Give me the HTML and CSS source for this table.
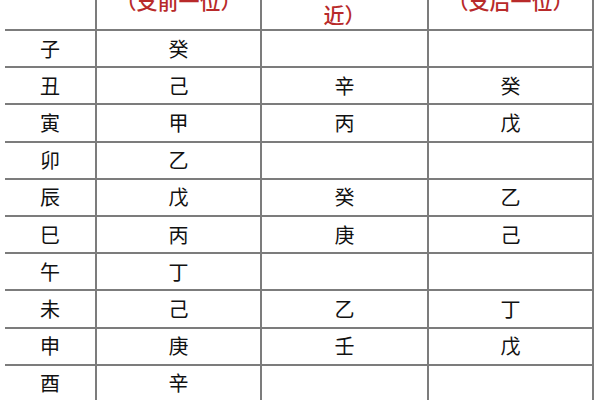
FILE: index.html
```html
<!DOCTYPE html>
<html lang="zh">
<head>
<meta charset="utf-8">
<title>地支藏干表</title>
<link rel="stylesheet" href="styles.css">
</head>
<body>
<div class="table">
  <div class="cell head"></div>
  <div class="cell head"><span class="one red">（支前一位）</span></div>
  <div class="cell head"><span class="two red">（与本支相<br>近）</span></div>
  <div class="cell head"><span class="one red">（支后一位）</span></div>

  <div class="cell">子</div><div class="cell">癸</div><div class="cell"></div><div class="cell"></div>
  <div class="cell">丑</div><div class="cell">己</div><div class="cell">辛</div><div class="cell">癸</div>
  <div class="cell">寅</div><div class="cell">甲</div><div class="cell">丙</div><div class="cell">戊</div>
  <div class="cell">卯</div><div class="cell">乙</div><div class="cell"></div><div class="cell"></div>
  <div class="cell">辰</div><div class="cell">戊</div><div class="cell">癸</div><div class="cell">乙</div>
  <div class="cell">巳</div><div class="cell">丙</div><div class="cell">庚</div><div class="cell">己</div>
  <div class="cell">午</div><div class="cell">丁</div><div class="cell"></div><div class="cell"></div>
  <div class="cell">未</div><div class="cell">己</div><div class="cell">乙</div><div class="cell">丁</div>
  <div class="cell">申</div><div class="cell">庚</div><div class="cell">壬</div><div class="cell">戊</div>
  <div class="cell">酉</div><div class="cell">辛</div><div class="cell"></div><div class="cell"></div>
</div>
</body>
</html>
```
FILE: styles.css
```css
html, body {
  margin: 0;
  padding: 0;
  background: #ffffff;
  overflow: hidden;
  width: 600px;
  height: 400px;
}
body {
  font-family: "Noto Sans CJK SC", "Noto Sans", sans-serif;
  color: #111111;
}
.table {
  display: grid;
  grid-template-columns: 92px 165px 167px 165px;
  grid-template-rows: 31px;
  grid-auto-rows: 37.2px;
  margin-left: 5px;
}
.cell {
  box-sizing: border-box;
  border-right: 2px solid #7c7c7c;
  border-bottom: 2px solid #7c7c7c;
  display: flex;
  align-items: center;
  justify-content: center;
  font-size: 20px;
  line-height: 1;
  overflow: hidden;
}
.head {
  align-items: flex-end;
  font-size: 21px;
  text-align: center;
}
.head .one {
  line-height: 22px;
  padding-bottom: 18px;
}
.head .two {
  line-height: 30px;
  padding-bottom: 0;
}
.red {
  color: #b82a2a;
  font-weight: 500;
}
```
